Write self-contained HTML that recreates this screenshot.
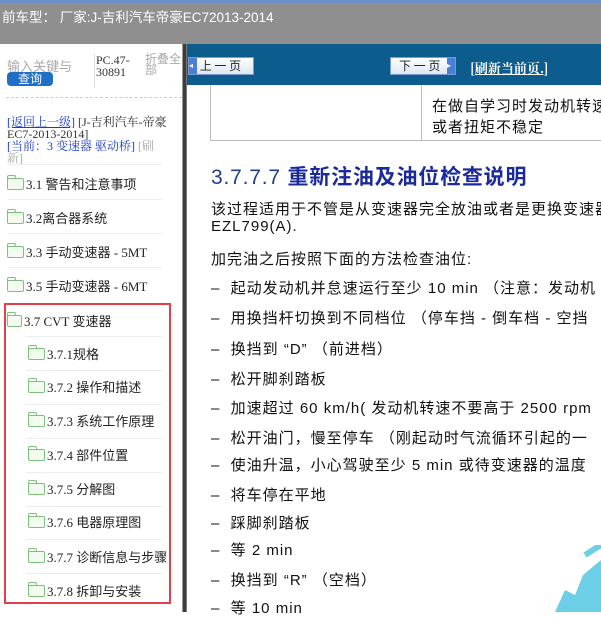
<!DOCTYPE html>
<html><head><meta charset="utf-8"><style>
*{margin:0;padding:0;box-sizing:border-box}
body{width:601px;height:612px;overflow:hidden;background:#fff;position:relative;font-family:"Liberation Serif","Noto Serif CJK SC",serif}
.a{position:absolute;white-space:nowrap}
.top{left:0;top:0;width:601px;height:44px;background:#8f8f8f;border-top:3px solid #6d8fc8}
.title{left:2px;top:6px;color:#fff;font:13.5px "Liberation Sans","Noto Sans CJK SC",sans-serif}
.item{position:absolute;left:7px;font-size:13px;color:#222;font-family:"Liberation Serif","Noto Sans CJK SC",serif}
.sep{position:absolute;left:8px;width:154px;height:1px;background:#eceff1}
.fold{display:inline-block;width:17px;height:12px;border:1.5px solid #7cc27a;border-radius:2px;background:#f3fbf1;vertical-align:-1px;margin-right:2px;position:relative}
.fold:before{content:"";position:absolute;left:-1.5px;top:-4px;width:7px;height:3px;border:1.5px solid #7cc27a;border-bottom:none;border-radius:2px 2px 0 0}
.c{position:absolute;left:211px;font:15px "Liberation Sans","Noto Sans CJK SC",sans-serif;color:#111;white-space:nowrap;letter-spacing:1px}
.btn{position:absolute;top:57px;height:18px;background:linear-gradient(#fff,#dfe6f3);border:1px solid #7a9ad0;font:12px "Noto Sans CJK SC",sans-serif;color:#222;line-height:16px}
</style></head><body>
<div class="a top"></div>
<div class="a title">前车型： 厂家:J-吉利汽车帝豪EC72013-2014</div>
<div class="a" style="left:7px;top:56px;font:13px 'Noto Sans CJK SC',sans-serif;color:#aaa">输入关键与</div>
<div class="a" style="left:7px;top:72px;width:46px;height:14px;background:#1f6fc6;border-radius:4px;color:#fff;font:12px 'Noto Sans CJK SC',sans-serif;text-align:center;line-height:14px">查询</div>
<div class="a" style="left:94px;top:54px;width:1px;height:34px;background:#ddd"></div>
<div class="a" style="left:96px;top:54px;font-size:12px;line-height:12px;color:#333">PC.47-<br>30891</div>
<div class="a" style="left:145px;top:53px;font:12px 'Noto Sans CJK SC',sans-serif;line-height:11px;color:#aaa">折叠全<br>部</div>
<div class="a" style="left:6px;top:97px;width:176px;border-top:1px dashed #ccc"></div>
<div class="a" style="left:7px;top:116px;font-size:12px;line-height:12px;color:#333;white-space:normal;width:160px"><span style="color:#1a3cc9;text-decoration:underline">[返回上一级]</span> [J-吉利汽车-帝豪EC7-2013-2014]<br><span style="color:#1a3cc9">[当前：3 变速器 驱动桥]</span> <span style="color:#aaa">[刷新]</span></div>
<div class="sep" style="top:164px"></div>
<div class="item" style="top:174px"><span class="fold"></span>3.1 警告和注意事项</div>
<div class="sep" style="top:199px"></div>
<div class="item" style="top:208px"><span class="fold"></span>3.2离合器系统</div>
<div class="sep" style="top:233px"></div>
<div class="item" style="top:242px"><span class="fold"></span>3.3 手动变速器 - 5MT</div>
<div class="sep" style="top:267px"></div>
<div class="item" style="top:276px"><span class="fold"></span>3.5 手动变速器 - 6MT</div>
<div class="a" style="left:4px;top:303px;width:167px;height:301px;border:2px solid #e04048"></div>
<div class="item" style="top:311px"><span class="fold" style="width:15px"></span>3.7 CVT 变速器</div>
<div class="sep" style="top:336px;left:26px;width:136px"></div>
<div class="item" style="left:28px;top:344px"><span class="fold"></span>3.7.1规格</div>
<div class="sep" style="top:370px;left:26px;width:136px"></div>
<div class="item" style="left:28px;top:377px"><span class="fold"></span>3.7.2 操作和描述</div>
<div class="sep" style="top:404px;left:26px;width:136px"></div>
<div class="item" style="left:28px;top:411px"><span class="fold"></span>3.7.3 系统工作原理</div>
<div class="sep" style="top:438px;left:26px;width:136px"></div>
<div class="item" style="left:28px;top:445px"><span class="fold"></span>3.7.4 部件位置</div>
<div class="sep" style="top:472px;left:26px;width:136px"></div>
<div class="item" style="left:28px;top:479px"><span class="fold"></span>3.7.5 分解图</div>
<div class="sep" style="top:506px;left:26px;width:136px"></div>
<div class="item" style="left:28px;top:512px"><span class="fold"></span>3.7.6 电器原理图</div>
<div class="sep" style="top:539px;left:26px;width:136px"></div>
<div class="item" style="left:28px;top:547px"><span class="fold"></span>3.7.7 诊断信息与步骤</div>
<div class="sep" style="top:573px;left:26px;width:136px"></div>
<div class="item" style="left:28px;top:581px"><span class="fold"></span>3.7.8 拆卸与安装</div>
<div class="a" style="left:182px;top:44px;width:5px;height:568px;background:#3d3d3d;border-left:1px solid #999;border-right:1px solid #777"></div>
<div class="a" style="left:187px;top:44px;width:414px;height:41px;background:#0c5c8e"></div>
<div class="btn" style="left:188px;width:66px"><span style="display:inline-block;width:8px;height:16px;background:#4a7fd8;color:#fff;font-size:8px;vertical-align:top">◂</span> 上 一 页</div>
<div class="btn" style="left:390px;width:66px;padding-left:8px">下 一 页 <span style="display:inline-block;width:8px;height:16px;background:#4a7fd8;color:#fff;font-size:8px;vertical-align:top;float:right">▸</span></div>
<div class="a" style="left:470px;top:58px;color:#fff;font:bold 13px 'Noto Serif CJK SC',serif;text-decoration:underline">[刷新当前页.]</div>
<div class="a" style="left:210px;top:85px;width:1px;height:55px;background:#bbb"></div>
<div class="a" style="left:421px;top:85px;width:1px;height:55px;background:#bbb"></div>
<div class="a" style="left:210px;top:140px;width:391px;height:1px;background:#bbb"></div>
<div class="c" style="left:432px;top:95px">在做自学习时发动机转速</div>
<div class="c" style="left:432px;top:116px">或者扭矩不稳定</div>
<div class="c" style="top:161px;font-size:21px;color:#1d3f8a;letter-spacing:0.8px">3.7.7.7 <b style="color:#1a2a9a">重新注油及油位检查说明</b></div>
<div class="c" style="top:198px">该过程适用于不管是从变速器完全放油或者是更换变速器</div>
<div class="c" style="top:218px">EZL799(A).</div>
<div class="c" style="top:248px">加完油之后按照下面的方法检查油位:</div>
<div class="c" style="top:277px">–&nbsp; 起动发动机并怠速运行至少 10 min （注意：发动机</div>
<div class="c" style="top:307px">–&nbsp; 用换挡杆切换到不同档位 （停车挡 - 倒车档 - 空挡</div>
<div class="c" style="top:338px">–&nbsp; 换挡到 “D” （前进档）</div>
<div class="c" style="top:368px">–&nbsp; 松开脚刹踏板</div>
<div class="c" style="top:397px">–&nbsp; 加速超过 60 km/h( 发动机转速不要高于 2500 rpm</div>
<div class="c" style="top:427px">–&nbsp; 松开油门，慢至停车 （刚起动时气流循环引起的一</div>
<div class="c" style="top:454px">–&nbsp; 使油升温，小心驾驶至少 5 min 或待变速器的温度</div>
<div class="c" style="top:484px">–&nbsp; 将车停在平地</div>
<div class="c" style="top:512px">–&nbsp; 踩脚刹踏板</div>
<div class="c" style="top:539px">–&nbsp; 等 2 min</div>
<div class="c" style="top:569px">–&nbsp; 换挡到 “R” （空档）</div>
<div class="c" style="top:597px">–&nbsp; 等 10 min</div>
<svg class="a" style="left:545px;top:545px" width="56" height="67"><path d="M10 67 L20 45 L30 50 L38 30 L50 20 L56 15 L56 67 Z" fill="#6dcfe6"/><path d="M40 10 L56 0" stroke="#6dcfe6" stroke-width="6"/></svg>
</body></html>
